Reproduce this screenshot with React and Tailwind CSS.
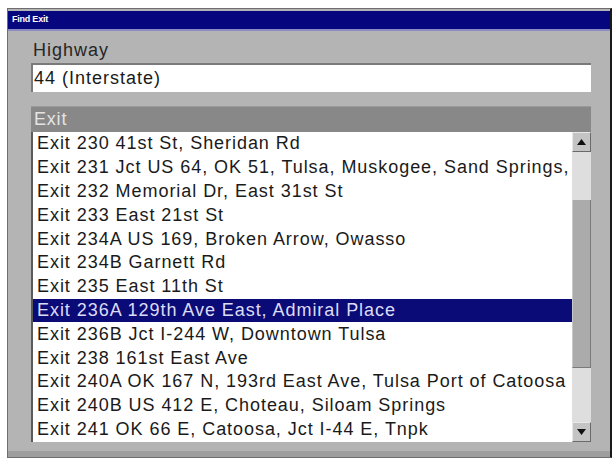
import React from 'react';

const EXITS = [
  'Exit 230 41st St, Sheridan Rd',
  'Exit 231 Jct US 64, OK 51, Tulsa, Muskogee, Sand Springs,',
  'Exit 232 Memorial Dr, East 31st St',
  'Exit 233 East 21st St',
  'Exit 234A US 169, Broken Arrow, Owasso',
  'Exit 234B Garnett Rd',
  'Exit 235 East 11th St',
  'Exit 236A 129th Ave East, Admiral Place',
  'Exit 236B Jct I-244 W, Downtown Tulsa',
  'Exit 238 161st East Ave',
  'Exit 240A OK 167 N, 193rd East Ave, Tulsa Port of Catoosa',
  'Exit 240B US 412 E, Choteau, Siloam Springs',
  'Exit 241 OK 66 E, Catoosa, Jct I-44 E, Tnpk',
];

const SELECTED = 7;

// small triangle used on the scroll buttons
const Arrow = ({ down }) => (
  <svg width="9" height="6" viewBox="0 0 9 6" className={down ? 'rotate-180' : ''}>
    <path d="M0 6 L4.5 0 L9 6 Z" fill="#111" />
  </svg>
);

const ScrollButton = ({ down }) => (
  <div className="h-[20px] flex items-center justify-center bg-[#c4c4c4] border-t border-l border-t-[#e8e8e8] border-l-[#e8e8e8] border-b border-r border-b-[#6a6a6a] border-r-[#6a6a6a]">
    <Arrow down={down} />
  </div>
);

export default function App() {
  return (
    <div className="w-[615px] h-[462px] bg-white pt-[8px] pl-[7px] pr-[3px] pb-[4px] font-['Liberation_Sans',Arial,sans-serif]">
      <div className="h-full flex flex-col bg-[#b4b4b4] border border-[#6e6e6e] border-r-2 border-r-[#1a1a1a]">
        {/* title bar */}
        <div className="mt-[2px] h-[20px] bg-[#06067e] border-b-2 border-[#8c8cc4] flex items-center px-[4px]">
          <span className="text-[9px] font-bold text-white tracking-tight">Find Exit</span>
        </div>

        <div className="flex-1 flex flex-col pl-[23px] pr-[19px] pt-[9px]">
          <div className="text-[18px] text-[#262626] tracking-[1px] pl-[2px] leading-[20px]">Highway</div>
          <div className="mt-[3px] h-[29px] bg-white border-t-2 border-l-2 border-[#7a7a7a] flex items-center pl-[1px]">
            <span className="text-[18px] text-[#1a1a1a] tracking-[1px]">44 (Interstate)</span>
          </div>

          <div className="mt-[14px] h-[26px] bg-[#888888] border-t border-[#9a9a9a] flex items-center pl-[3px]">
            <span className="text-[18px] text-[#e4e4e4] tracking-[0.8px]">Exit</span>
          </div>

          <div className="flex bg-white border-l-2 border-[#5a5a5a] h-[310px]">
            <div className="flex-1 flex flex-col overflow-hidden">
              {EXITS.map((e, i) => (
                <div
                  key={e}
                  className={`h-[23.8px] shrink-0 flex items-center pl-[4px] whitespace-nowrap text-[18px] tracking-[0.95px] ${
                    i === SELECTED ? 'bg-[#0b0b78] text-[#dcdcf4]' : 'text-[#1a1a1a]'
                  }`}
                >
                  {e}
                </div>
              ))}
            </div>
            <div className="w-[19px] flex flex-col bg-[#dedede]">
              <ScrollButton />
              <div className="h-[48px]" />
              <div className="h-[168px] bg-[#ababab] border-r border-b border-[#7a7a7a] border-l border-l-[#c8c8c8]" />
              <div className="flex-1" />
              <ScrollButton down />
            </div>
          </div>
          <div className="flex-1" />
        </div>
        <div className="h-[6px] bg-[#9e9e9e]" />
      </div>
    </div>
  );
}
